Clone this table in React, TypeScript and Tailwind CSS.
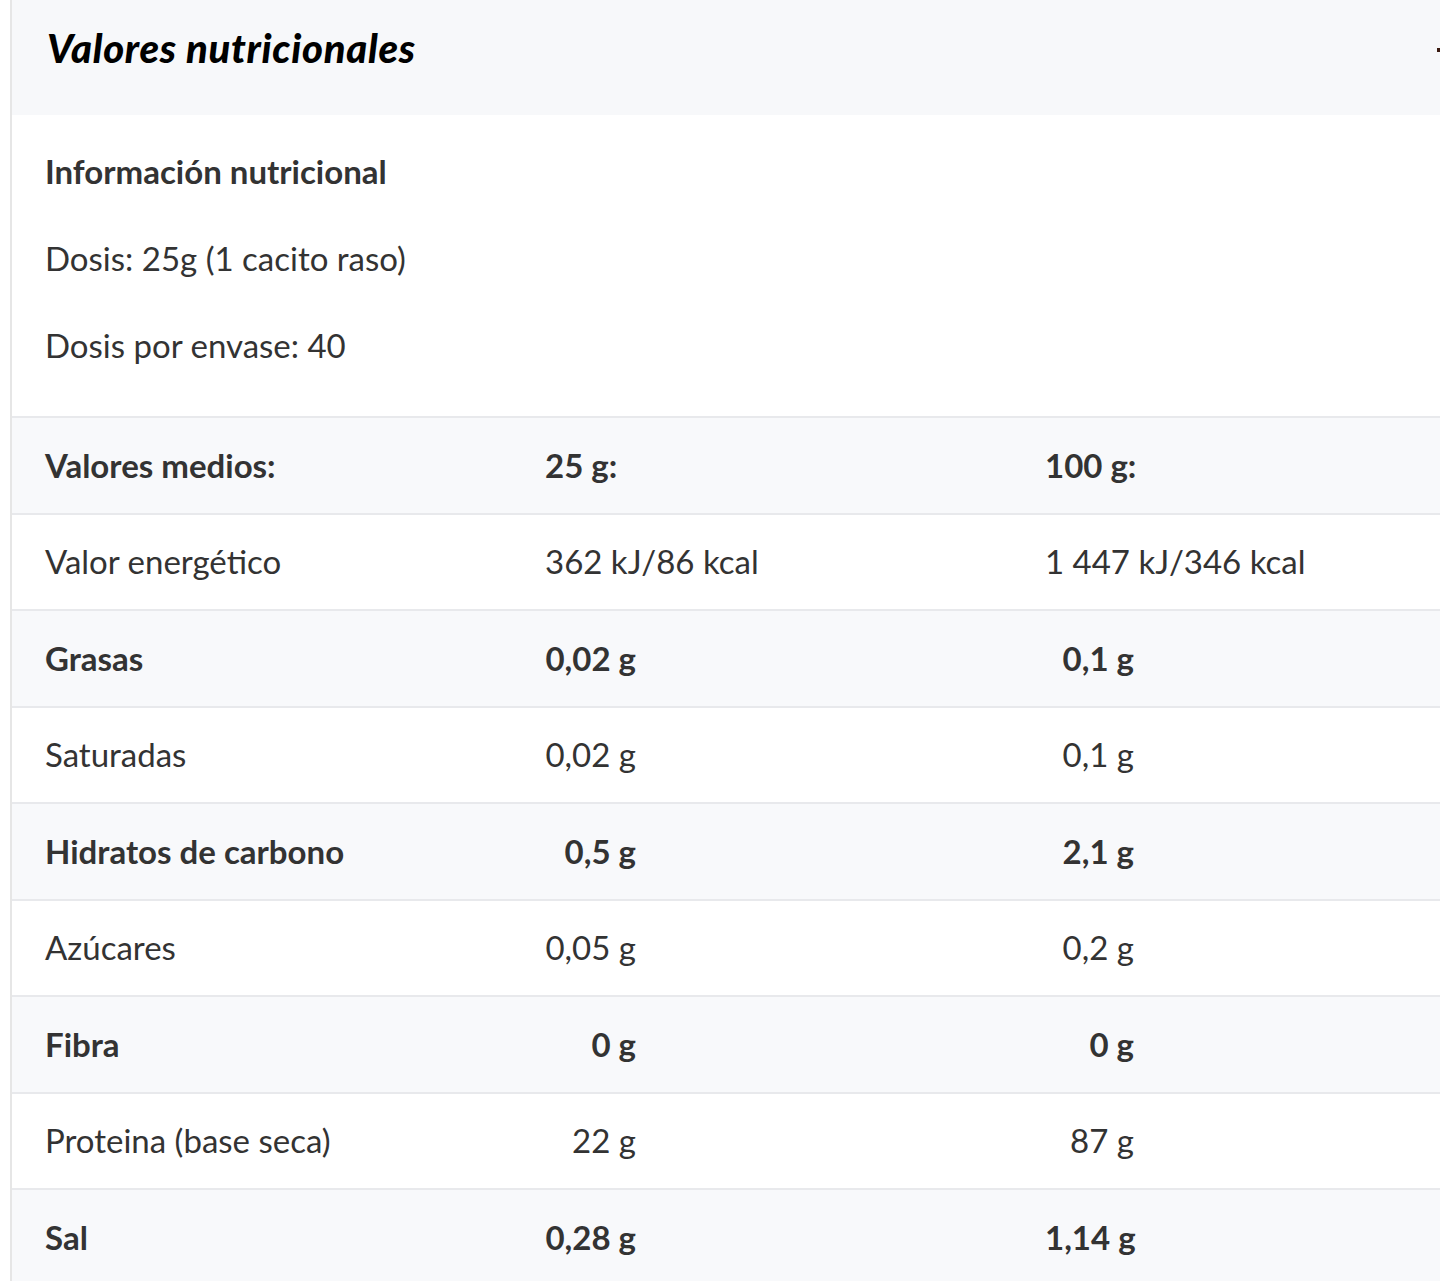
import React from "react";

type Row = { label: string; a: string; b: string; bold?: boolean; head?: boolean };

const rows: Row[] = [
  { label: "Valores medios:", a: "25 g:", b: "100 g:", bold: true, head: true },
  { label: "Valor energético", a: "362 kJ/86 kcal", b: "1 447 kJ/346 kcal" },
  { label: "Grasas", a: "0,02 g", b: "0,1 g", bold: true },
  { label: "Saturadas", a: "0,02 g", b: "0,1 g" },
  { label: "Hidratos de carbono", a: "0,5 g", b: "2,1 g", bold: true },
  { label: "Azúcares", a: "0,05 g", b: "0,2 g" },
  { label: "Fibra", a: "0 g", b: "0 g", bold: true },
  { label: "Proteina (base seca)", a: "22 g", b: "87 g" },
  { label: "Sal", a: "0,28 g", b: "1,14 g", bold: true },
];

export default function App() {
  return (
    <div
      className="w-[1440px] h-[1281px] overflow-hidden bg-white text-[#333]"
      style={{ fontFamily: "Lato, 'Open Sans', sans-serif" }}
    >
      <div className="ml-[10px] border-l-[2px] border-[#e6e6e6] h-full">
        <div className="relative h-[115px] bg-[#f7f8fa] flex items-center pl-[35px] pb-[20px]">
          <h2 className="text-[40px] font-black italic text-black tracking-[0.7px]">
            Valores nutricionales
          </h2>
          <span className="absolute right-0 top-[48px] w-[3px] h-[4px] bg-[#3a1a10]" />
        </div>
        <div className="pt-[36px] pb-[4px] pl-[33px] text-[33px] leading-[40px]">
          <p className="font-bold h-[87px]">Información nutricional</p>
          <p className="h-[87px]">Dosis: 25g (1 cacito raso)</p>
          <p className="h-[87px]">Dosis por envase: 40</p>
        </div>
        <div>
          {rows.map((r, i) => (
            <div
              key={i}
              className={`h-[96.5px] box-border border-t-[2px] border-[#e8e9ec] flex items-center text-[33px] ${
                i % 2 === 0 ? "bg-[#f8f9fb]" : "bg-white"
              } ${r.bold ? "font-bold" : ""}`}
            >
              <div className="w-[500px] pl-[33px] whitespace-nowrap">{r.label}</div>
              <div className="w-[500px] pl-[33px]">
                <span
                  className={`inline-block w-[91px] whitespace-nowrap ${r.head ? "text-left" : "text-right"}`}
                >
                  {r.a}
                </span>
              </div>
              <div className="pl-[33px]">
                <span
                  className={`inline-block w-[89px] whitespace-nowrap ${r.head ? "text-left" : "text-right"}`}
                >
                  {r.b}
                </span>
              </div>
            </div>
          ))}
        </div>
      </div>
    </div>
  );
}
